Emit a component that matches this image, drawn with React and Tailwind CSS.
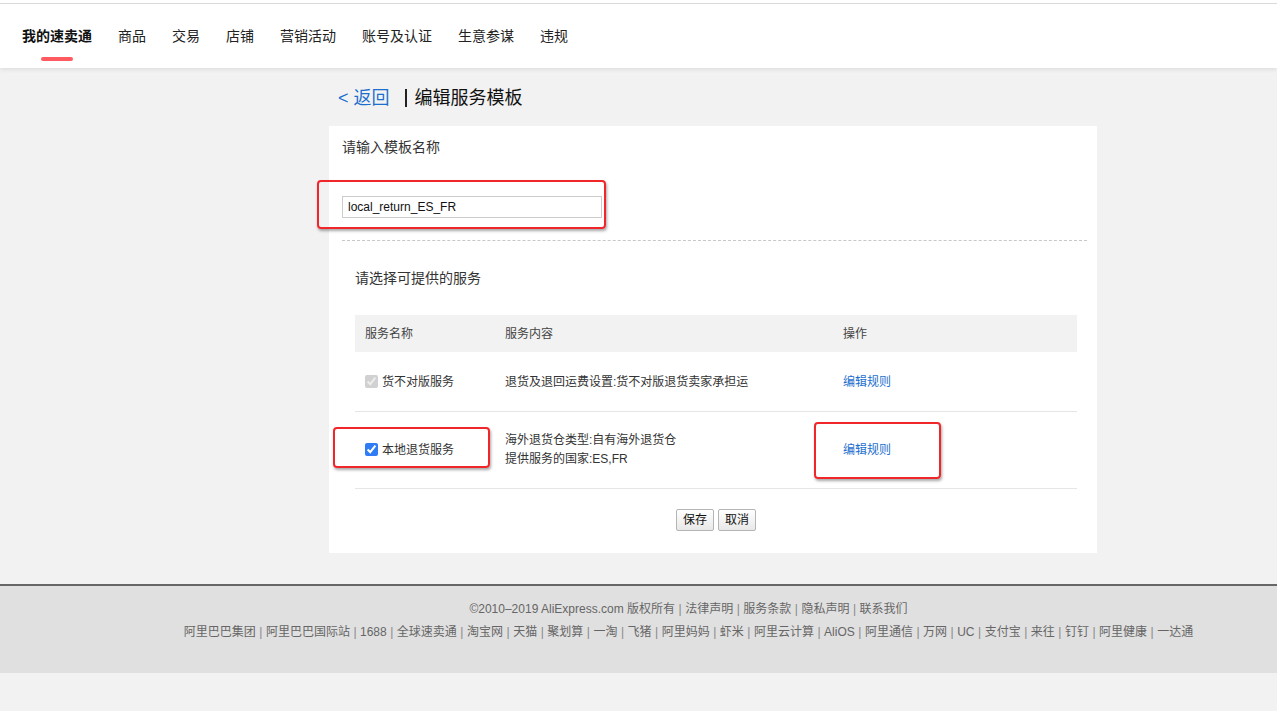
const font = { fontFamily: '"Liberation Sans", "Noto Sans CJK SC", sans-serif' }

const navItems = ['我的速卖通', '商品', '交易', '店铺', '营销活动', '账号及认证', '生意参谋', '违规']

const footerLinks1 = ['©2010–2019 AliExpress.com 版权所有', '法律声明', '服务条款', '隐私声明', '联系我们']
const footerLinks2 = [
  '阿里巴巴集团', '阿里巴巴国际站', '1688', '全球速卖通', '淘宝网', '天猫', '聚划算', '一淘', '飞猪', '阿里妈妈',
  '虾米', '阿里云计算', 'AliOS', '阿里通信', '万网', 'UC', '支付宝', '来往', '钉钉', '阿里健康', '一达通',
]

function RedBox({ className }) {
  return (
    <div
      className={`pointer-events-none absolute rounded-[4px] border-2 border-[#f0262b] shadow-[1px_2px_3px_rgba(0,0,0,0.35)] ${className}`}
    />
  )
}

function FooterLine({ items }) {
  return (
    <div className="flex items-center">
      {items.map((t, i) => (
        <span key={t} className="flex items-center">
          {i > 0 && <span className="px-[3.5px] text-[#888]">|</span>}
          {t}
        </span>
      ))}
    </div>
  )
}

export default function App() {
  return (
    <div className="min-h-[711px] bg-[#f2f2f2] text-[#333]" style={font}>
      <div className="h-[3px] bg-white" />
      <div className="h-px bg-[#dcdcdc]" />
      <header className="relative z-10 flex h-[64px] items-start bg-white pl-[22px] shadow-[0_2px_4px_rgba(0,0,0,0.08)]">
        {navItems.map((item, i) => (
          <div key={item} className="mr-[26px] flex flex-col items-center pt-[22px]">
            <span className={`text-[14px] leading-[20px] ${i === 0 ? 'font-bold text-[#111]' : 'text-[#222]'}`}>{item}</span>
            {i === 0 && <span className="mt-[11px] h-[4px] w-[32px] rounded-full bg-[#ff5a5f]" />}
          </div>
        ))}
      </header>

      <main className="ml-[329px] w-[768px]">
        <div className="flex h-[58px] items-center pl-[9px] pt-[2px] text-[18px]">
          <span className="text-[#1d6fce]">&lt; 返回</span>
          <span className="ml-[15px] mr-[8px] h-[18px] w-[2px] bg-[#222]" />
          <span className="text-[#111]">编辑服务模板</span>
        </div>

        <div className="bg-white pb-[22px] pl-[13px] pr-[10px] pt-[11px]">
          <div className="text-[14px] leading-[20px] text-[#333]">请输入模板名称</div>
          <div className="relative mt-[39px]">
            <div className="flex h-[22px] w-[260px] items-center border border-[#ccc] px-[5px] text-[12px] text-[#111]">
              local_return_ES_FR
            </div>
            <RedBox className="left-[-25px] top-[-16px] h-[49px] w-[289px]" />
          </div>
          <div className="mt-[22px] border-t border-dashed border-[#c8c8c8]" />

          <div className="pl-[13px] pr-[10px]">
            <div className="mt-[27px] text-[14px] leading-[20px]">请选择可提供的服务</div>
            <table className="mt-[27px] w-full border-collapse text-[12px]">
              <thead>
                <tr className="h-[37px] bg-[#f2f2f2] text-left text-[#444]">
                  <th className="w-[150px] pl-[10px] font-normal">服务名称</th>
                  <th className="w-[338px] font-normal">服务内容</th>
                  <th className="font-normal">操作</th>
                </tr>
              </thead>
              <tbody>
                <tr className="h-[59px] border-b border-[#e6e6e6]">
                  <td className="pl-[10px] pt-[1px]">
                    <label className="flex items-center gap-[4px]">
                      <input type="checkbox" checked disabled readOnly className="m-0 h-[13px] w-[13px]" />
                      <span>货不对版服务</span>
                    </label>
                  </td>
                  <td className="pt-[1px]">退货及退回运费设置:货不对版退货卖家承担运</td>
                  <td className="pt-[1px] text-[#1d6fce]">编辑规则</td>
                </tr>
                <tr className="h-[77px] border-b border-[#e6e6e6]">
                  <td className="pl-[10px]">
                    <div className="relative">
                      <label className="flex items-center gap-[4px]">
                        <input type="checkbox" checked readOnly className="m-0 h-[13px] w-[13px] accent-[#2f7cf6]" />
                        <span>本地退货服务</span>
                      </label>
                      <RedBox className="left-[-32px] top-[-14px] h-[41px] w-[157px]" />
                    </div>
                  </td>
                  <td className="leading-[19px]">
                    <div>海外退货仓类型:自有海外退货仓</div>
                    <div>提供服务的国家:ES,FR</div>
                  </td>
                  <td>
                    <div className="relative text-[#1d6fce]">
                      编辑规则
                      <RedBox className="left-[-29px] top-[-19px] h-[57px] w-[127px]" />
                    </div>
                  </td>
                </tr>
              </tbody>
            </table>
            <div className="mt-[20px] flex justify-center gap-[4px]">
              {['保存', '取消'].map((b) => (
                <button
                  key={b}
                  className="h-[22px] rounded-[2px] border border-[#b5b5b5] bg-gradient-to-b from-white to-[#e8e8e8] px-[6px] text-[12px] text-[#111]"
                >
                  {b}
                </button>
              ))}
            </div>
          </div>
        </div>
      </main>

      <footer className="mt-[31px] border-t-2 border-[#666] bg-[#e0e0e0]">
        <div className="flex h-[87px] flex-col items-center gap-[5px] pl-[100px] pt-[14px] text-[12px] leading-[18px] text-[#666]">
          <FooterLine items={footerLinks1} />
          <FooterLine items={footerLinks2} />
        </div>
      </footer>
    </div>
  )
}
